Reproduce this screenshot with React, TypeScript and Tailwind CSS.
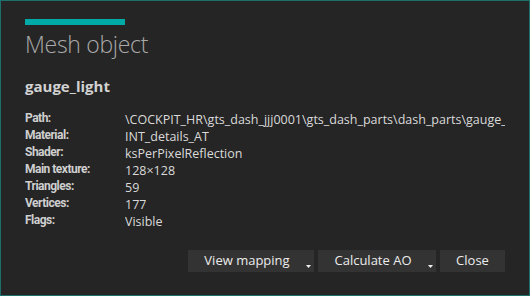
import React from 'react';

const rows = [
  { label: 'Path:', value: '\\COCKPIT_HR\\gts_dash_jjj0001\\gts_dash_parts\\dash_parts\\gauge_light' },
  { label: 'Material:', value: 'INT_details_AT' },
  { label: 'Shader:', value: 'ksPerPixelReflection' },
  { label: 'Main texture:', value: '128×128' },
  { label: 'Triangles:', value: '59' },
  { label: 'Vertices:', value: '177' },
  { label: 'Flags:', value: 'Visible' },
];

function Arrow() {
  return (
    <svg className="absolute right-[3px] bottom-[4px]" width="5" height="3" viewBox="0 0 5 3">
      <path d="M0 0 L5 0 L2.5 3 Z" fill="#f0f0f0" />
    </svg>
  );
}

export default function App() {
  return (
    <div
      className="w-[530px] h-[296px] border border-[#1c6f6a] bg-[#252525] pl-6 pr-6 pt-[18px] flex flex-col overflow-hidden"
      style={{ fontFamily: '"Open Sans", "Noto Sans", sans-serif' }}
    >
      {/* Header */}
      <div className="w-[100px] h-[6px] bg-[#00aaa7]" />
      <h1 className="mt-[3px] text-[23px] leading-[32px] font-light tracking-[-0.3px] text-[#a9a9a9]">Mesh object</h1>

      <h2 className="mt-[16px] text-[15px] leading-[20px] font-bold text-[#d2d2d2]">gauge_light</h2>

      {/* Properties */}
      <div className="mt-[15px] flex flex-col">
        {rows.map((row) => (
          <div key={row.label} className="flex items-start h-[17px]">
            <span
              className="w-[100px] shrink-0 text-[12px] leading-[14px] font-bold text-[#cfcfcf] tracking-[-0.5px]"
              style={{ fontFamily: 'Roboto, "Liberation Sans", sans-serif' }}
            >
              {row.label}
            </span>
            <span className="text-[12.5px] leading-[17px] text-[#dadada] whitespace-nowrap overflow-hidden">{row.value}</span>
          </div>
        ))}
      </div>

      {/* Actions */}
      <div className="mt-auto mb-[23px] flex justify-end gap-1">
        <button className="relative w-[126px] h-[22px] bg-[#333333] text-[13px] text-[#ececec] pr-[8px]">
          View mapping
          <Arrow />
        </button>
        <button className="relative w-[118px] h-[22px] bg-[#333333] text-[13px] text-[#ececec] pr-[8px]">
          Calculate AO
          <Arrow />
        </button>
        <button className="w-[65px] h-[22px] bg-[#333333] text-[13px] text-[#ececec]">Close</button>
      </div>
    </div>
  );
}
